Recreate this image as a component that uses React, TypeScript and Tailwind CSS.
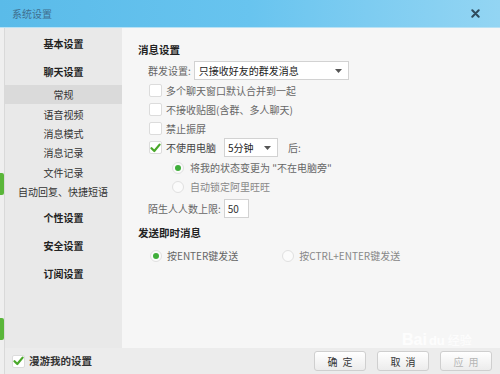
import React from "react";

const font = { fontFamily: '"Noto Sans CJK SC", "Noto Sans", sans-serif' };

const Check: React.FC<{ on?: boolean }> = ({ on }) => (
  <span className="w-[13px] h-[13px] bg-white border border-[#dcdcdc] rounded-[2px] flex items-center justify-center shrink-0">
    {on && (
      <svg width="11" height="10" viewBox="0 0 11 10">
        <path d="M1.5 5.2 L4.3 8 L9.6 1.6" fill="none" stroke="#4aa82a" strokeWidth="2.2" strokeLinecap="round" strokeLinejoin="round" />
      </svg>
    )}
  </span>
);

const Radio: React.FC<{ on?: boolean }> = ({ on }) => (
  <span className="w-[12px] h-[12px] rounded-full bg-[#fbfbfb] border border-[#e0e0e0] flex items-center justify-center shrink-0">
    {on && <span className="w-[6px] h-[6px] rounded-full bg-[#3fae3a]" />}
  </span>
);

const Arrow = () => (
  <svg width="7" height="4" viewBox="0 0 7 4">
    <path d="M0 0 H7 L3.5 4 Z" fill="#555" />
  </svg>
);

const SideHead: React.FC<{ children: React.ReactNode }> = ({ children }) => (
  <div className="h-[28px] flex items-center justify-center text-[10px] font-bold text-[#222]">{children}</div>
);

const SideItem: React.FC<{ children: React.ReactNode; active?: boolean }> = ({ children, active }) => (
  <div className={`h-[19.4px] flex items-center justify-center text-[10px] text-[#333] ${active ? "bg-[#dadada]" : ""}`}>
    {children}
  </div>
);

const Btn: React.FC<{ children: React.ReactNode; disabled?: boolean }> = ({ children, disabled }) => (
  <div
    className={`h-[20px] w-[52px] rounded-[3px] border border-[#cfcfcf] bg-gradient-to-b from-white to-[#ececec] flex items-center justify-center text-[10px] tracking-[5px] pl-[5px] ${
      disabled ? "text-[#b5b5b5]" : "text-[#333]"
    }`}
  >
    {children}
  </div>
);

export default function App() {
  return (
    <div className="w-[500px] h-[374px] flex flex-col bg-[#f6f6f6] overflow-hidden relative" style={font}>
      {/* title bar */}
      <div className="h-[28px] shrink-0 flex items-center justify-between px-[12px] bg-gradient-to-r from-[#5abbe9] via-[#68c4ef] to-[#93d5f3] border-b border-[#b9e2f5]">
        <span className="text-[10px] text-[#3f6f8f]">系统设置</span>
        <svg width="9" height="9" viewBox="0 0 9 9" className="mr-[8px]">
          <path d="M1.3 1.3 L7.7 7.7 M7.7 1.3 L1.3 7.7" stroke="#2f4b5c" strokeWidth="2" strokeLinecap="round" />
        </svg>
      </div>

      <div className="flex-1 flex min-h-0">
        {/* left window edge */}
        <div className="w-[5px] shrink-0 bg-[#efefef] border-r border-[#d9d9d9] flex flex-col">
          <div className="mt-[145px] h-[22px] w-[4px] bg-[#5ab63a] rounded-r-[2px]" />
          <div className="mt-[123px] h-[22px] w-[4px] bg-[#5ab63a] rounded-r-[2px]" />
        </div>

        <div className="flex-1 flex flex-col min-w-0">
          <div className="flex-1 flex min-h-0">
            {/* sidebar */}
            <div className="w-[117px] shrink-0 bg-[#e9e9e9] pt-[1px]">
              <SideHead>基本设置</SideHead>
              <SideHead>聊天设置</SideHead>
              <SideItem active>常规</SideItem>
              <SideItem>语音视频</SideItem>
              <SideItem>消息模式</SideItem>
              <SideItem>消息记录</SideItem>
              <SideItem>文件记录</SideItem>
              <div className="h-[19.4px] flex items-center pl-[13px] text-[10px] text-[#333]">自动回复、快捷短语</div>
              <div className="h-[2px]" />
              <SideHead>个性设置</SideHead>
              <SideHead>安全设置</SideHead>
              <SideHead>订阅设置</SideHead>
            </div>

            {/* content */}
            <div className="flex-1 bg-[#f6f6f6] pl-[16px] pt-[13px] text-[10px] text-[#666]">
              <div className="h-[18px] flex items-center font-bold text-[#222] text-[10.5px]">消息设置</div>

              <div className="mt-[2px] h-[19px] flex items-center pl-[10px]">
                <span>群发设置:</span>
                <div className="ml-[3px] w-[155px] h-[19px] bg-white border border-[#d2d2d2] flex items-center justify-between pl-[4px] pr-[6px] text-[#222]">
                  <span>只接收好友的群发消息</span>
                  <Arrow />
                </div>
              </div>

              <div className="h-[19px] mt-[1px] flex items-center pl-[11px] gap-[4px]">
                <Check />
                <span>多个聊天窗口默认合并到一起</span>
              </div>
              <div className="h-[19px] flex items-center pl-[11px] gap-[4px]">
                <Check />
                <span>不接收贴图(含群、多人聊天)</span>
              </div>
              <div className="h-[19px] flex items-center pl-[11px] gap-[4px]">
                <Check />
                <span>禁止振屏</span>
              </div>
              <div className="h-[19px] flex items-center pl-[11px] gap-[4px]">
                <Check on />
                <span className="text-[#444]">不使用电脑</span>
                <div className="ml-[4px] w-[54px] h-[19px] bg-white border border-[#d2d2d2] flex items-center justify-between pl-[3px] pr-[6px] text-[#222]">
                  <span>5分钟</span>
                  <Arrow />
                </div>
                <span className="ml-[6px]">后:</span>
              </div>
              <div className="h-[19px] mt-[1px] flex items-center pl-[34px] gap-[6px]">
                <Radio on />
                <span>将我的状态变更为 "不在电脑旁"</span>
              </div>
              <div className="h-[19px] flex items-center pl-[34px] gap-[6px] text-[#888]">
                <Radio />
                <span>自动锁定阿里旺旺</span>
              </div>
              <div className="mt-[3px] h-[19px] flex items-center pl-[10px]">
                <span>陌生人人数上限:</span>
                <div className="ml-[3px] w-[25px] h-[19px] bg-white border border-[#d2d2d2] flex items-center pl-[3px] text-[#333]">50</div>
              </div>

              <div className="mt-[6px] h-[18px] flex items-center font-bold text-[#222] text-[10.5px]">发送即时消息</div>
              <div className="mt-[4px] h-[19px] flex items-center pl-[12px]">
                <Radio on />
                <span className="ml-[5px]">按ENTER键发送</span>
                <span className="ml-[44px]"><Radio /></span>
                <span className="ml-[5px] text-[#888]">按CTRL+ENTER键发送</span>
              </div>
            </div>
          </div>

          {/* bottom bar */}
          <div className="h-[26px] shrink-0 bg-[#ececec] flex items-center pl-[7px] pr-[8px]">
            <Check on />
            <span className="ml-[4px] text-[10.5px] font-bold text-[#333]">漫游我的设置</span>
            <div className="ml-auto flex gap-[11px]">
              <Btn>确定</Btn>
              <Btn>取消</Btn>
              <Btn disabled>应用</Btn>
            </div>
          </div>
        </div>
      </div>

      {/* watermark */}
      <div className="absolute left-[402px] top-[328px] flex items-baseline text-white/80 pointer-events-none">
        <span className="text-[16px] font-bold" style={{ fontFamily: '"Liberation Sans", sans-serif' }}>Bai</span>
        <span className="text-[13px] font-bold ml-[2px]" style={{ fontFamily: '"Liberation Sans", sans-serif' }}>du</span>
        <span className="text-[12px] ml-[3px]">经验</span>
      </div>
    </div>
  );
}
